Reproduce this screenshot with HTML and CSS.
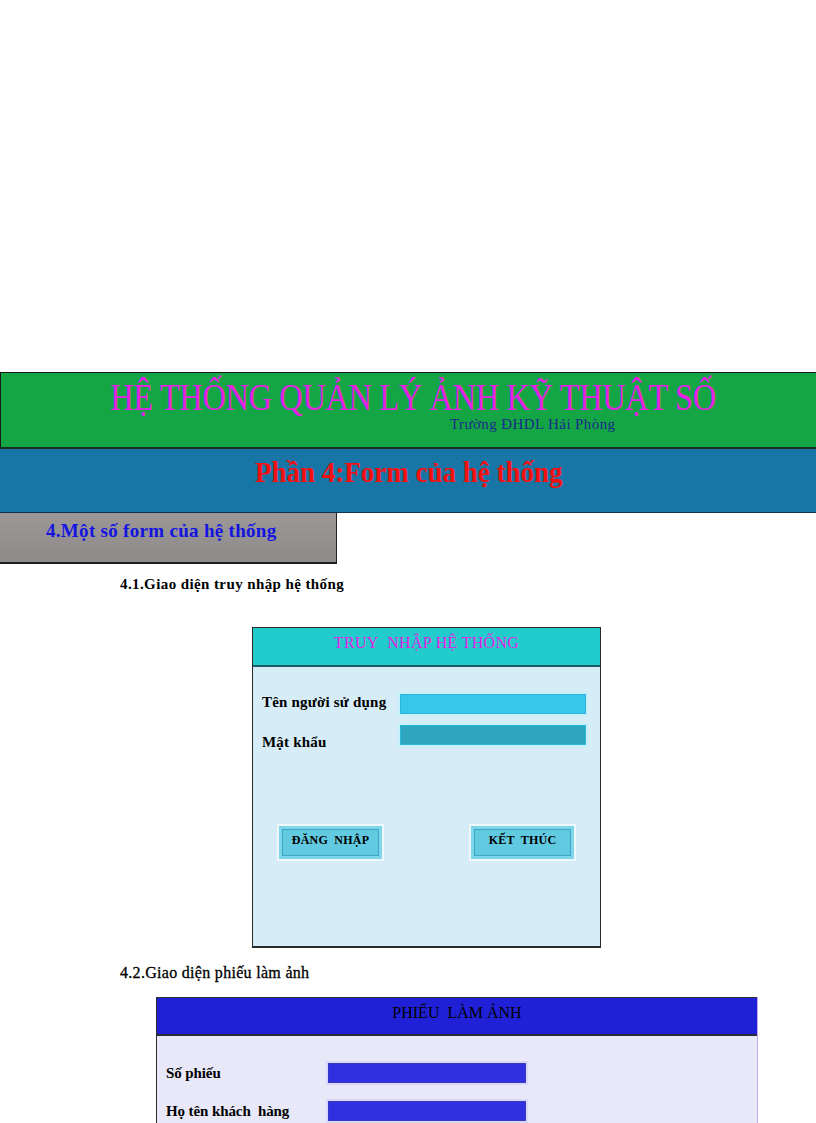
FILE: index.html
```html
<!DOCTYPE html>
<html lang="vi">
<head>
<meta charset="utf-8">
<title>Hệ thống quản lý ảnh kỹ thuật số</title>
<link rel="stylesheet" href="styles.css">
</head>
<body>
<div class="page">
  <header class="banner">
    <h1 class="banner-title"><span class="squeeze">HỆ THỐNG QUẢN LÝ ẢNH KỸ THUẬT SỐ</span></h1>
    <div class="banner-sub">Trường ĐHDL Hải Phòng</div>
  </header>
  <div class="part">
    <h2 class="part-title"><span class="squeeze">Phần 4:Form của hệ thống</span></h2>
  </div>
  <div class="sect">
    <h3 class="sect-title">4.Một số form của hệ thống</h3>
  </div>

  <p class="sub sub-login">4.1.Giao diện truy nhập hệ thống</p>

  <div class="login">
    <div class="login-head">TRUY&nbsp; NHẬP HỆ THỐNG</div>
    <div class="login-body">
      <div class="login-grid">
        <span class="lbl lbl-user">Tên người sử dụng</span>
        <span class="field field-user"></span>
        <span class="lbl lbl-pass">Mật khẩu</span>
        <span class="field field-pass"></span>
      </div>
      <div class="btn-row">
        <span class="btn">ĐĂNG&nbsp; NHẬP</span>
        <span class="btn">KẾT&nbsp; THÚC</span>
      </div>
    </div>
  </div>

  <p class="sub sub-ticket">4.2.Giao diện phiếu làm ảnh</p>

  <div class="ticket">
    <div class="ticket-head">PHIẾU&nbsp; LÀM ẢNH</div>
    <div class="ticket-body">
      <div class="ticket-row">
        <span class="tlbl">Số phiếu</span>
        <span class="tfield"></span>
      </div>
      <div class="ticket-row">
        <span class="tlbl">Họ tên khách&nbsp; hàng</span>
        <span class="tfield"></span>
      </div>
    </div>
  </div>
</div>
</body>
</html>
```

FILE: styles.css
```css
* { box-sizing: border-box; }

html, body {
  margin: 0;
  padding: 0;
  background: #ffffff;
}

body {
  font-family: "Liberation Serif", "Times New Roman", serif;
  color: #000;
  overflow: hidden;
  height: 1123px;
}

.page {
  width: 816px;
  height: 1123px;
  overflow: hidden;
  padding-top: 372px;
}

.squeeze {
  display: inline-block;
  transform: scaleX(0.88);
  transform-origin: center;
  white-space: nowrap;
}

/* ---------- green banner ---------- */
.banner {
  height: 77px;
  background: #14a645;
  border: 1px solid #1a1a1a;
  border-right: none;
  border-bottom: 2px solid #1a3020;
}

.banner-title {
  margin: 0;
  padding-top: 5px;
  padding-left: 10px;
  text-align: center;
  font-weight: normal;
  font-size: 37px;
  line-height: 40px;
  color: #e620e6;
  letter-spacing: -0.5px;
}

.banner-sub {
  margin-top: -2px;
  padding-left: 449px;
  font-size: 15px;
  line-height: 16px;
  color: #1c2a8c;
  letter-spacing: 0.4px;
}

/* ---------- blue band ---------- */
.part {
  height: 64px;
  background: #1876a6;
  border-bottom: 1px solid #12324a;
}

.part-title {
  margin: 0;
  padding-top: 6px;
  padding-left: 2px;
  text-align: center;
  font-size: 30px;
  line-height: 34px;
  font-weight: bold;
  color: #f41010;
}

.part-title .squeeze {
  transform: scaleX(0.9);
}

/* ---------- grey section box ---------- */
.sect {
  width: 337px;
  height: 51px;
  background: linear-gradient(#9c9898, #8e8a8a);
  border-right: 1px solid #202020;
  border-bottom: 2px solid #202020;
}

.sect-title {
  margin: 0;
  padding: 5px 0 0 46px;
  font-size: 19px;
  line-height: 26px;
  font-weight: bold;
  color: #1414e0;
  letter-spacing: 0.3px;
}

/* ---------- sub headings ---------- */
.sub {
  margin: 0;
  padding-left: 120px;
  font-size: 15px;
  line-height: 20px;
  letter-spacing: 0.4px;
}

.sub-login {
  margin-top: 10px;
  font-weight: bold;
}

.sub-ticket {
  margin-top: 15px;
  font-size: 16px;
  font-weight: normal;
  letter-spacing: 0.3px;
  -webkit-text-stroke: 0.3px #000;
}

/* ---------- login form ---------- */
.login {
  margin-top: 33px;
  margin-left: 252px;
  width: 349px;
  height: 321px;
  border: 1px solid #2a2a2a;
  border-bottom: 2px solid #2a2a2a;
  background: #d6edf7;
  display: flex;
  flex-direction: column;
}

.login-head {
  height: 39px;
  background: #22cccc;
  border-bottom: 2px solid #1d5c64;
  text-align: center;
  font-size: 16px;
  line-height: 30px;
  color: #e41ee4;
  letter-spacing: 0.3px;
}

.login-body {
  flex: 1;
  padding: 25px 12px 0 9px;
}

.login-grid {
  display: grid;
  grid-template-columns: 136px 190px;
  grid-template-rows: 24px 24px;
  row-gap: 7px;
}

.lbl {
  font-weight: bold;
  font-size: 15px;
  line-height: 20px;
  letter-spacing: 0.2px;
}

.lbl-user { align-self: center; margin-top: -4px; }
.lbl-pass { align-self: end; margin-bottom: -5px; }

.field {
  display: block;
  border: 2px solid #c8f0fa;
  outline: 1px solid #2cb6d6;
  outline-offset: -3px;
}

.field-user { background: #36c8ea; }
.field-pass { background: #2ea6c0; }

.btn-row {
  display: flex;
  gap: 85px;
  padding-left: 15px;
  margin-top: 77px;
}

.btn {
  width: 107px;
  height: 37px;
  display: flex;
  align-items: center;
  justify-content: center;
  background: #62cae0;
  border: 2px solid #eef8fc;
  box-shadow: inset 0 0 0 3px #7ed6ea, inset 0 0 0 4px #3aa8c4;
  font-size: 12px;
  font-weight: bold;
  letter-spacing: 0.2px;
  padding-bottom: 4px;
}

/* ---------- ticket form ---------- */
.ticket {
  margin-top: 14px;
  margin-left: 156px;
  width: 602px;
  height: 140px;
  background: #e8e8f8;
  border-left: 1px solid #2a2a2a;
  border-right: 1px solid #c8a8f0;
  display: flex;
  flex-direction: column;
}

.ticket-head {
  height: 39px;
  background: #2020d6;
  border-top: 1px solid #303030;
  border-bottom: 2px solid #2a2a3a;
  text-align: center;
  font-size: 16px;
  line-height: 30px;
  color: #000;
  letter-spacing: 0;
}

.ticket-body {
  padding: 25px 0 0 9px;
  display: flex;
  flex-direction: column;
  gap: 14px;
}

.ticket-row {
  display: flex;
  align-items: center;
  height: 24px;
}

.tlbl {
  width: 160px;
  font-size: 15px;
  font-weight: bold;
  line-height: 20px;
  letter-spacing: -0.1px;
}

.tfield {
  display: block;
  width: 202px;
  height: 24px;
  background: #3030e0;
  border: 2px solid #d8d8fa;
  outline: 1px solid #3a3ac0;
  outline-offset: -3px;
}
```
